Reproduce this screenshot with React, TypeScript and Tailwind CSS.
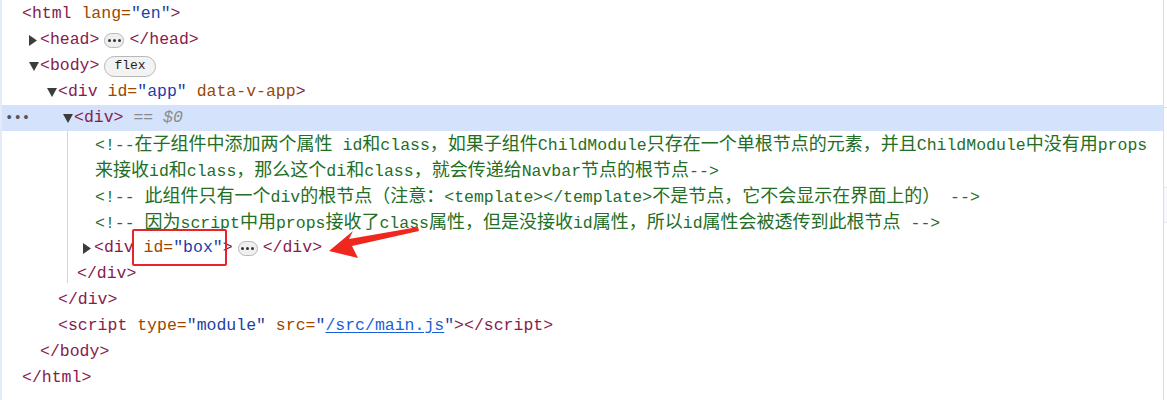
import type { ReactNode } from "react";

const TAG = "text-[#881a4e]";
const ATTR = "text-[#9a4800]";
const VAL = "text-[#1a3fa6]";
const CMT = "text-[#236e25]";

// ascii in mono, CJK runs a bit larger so their width matches the devtools font
function Mixed({ text, className }: { text: string; className?: string }) {
  const parts = text.split(/([\u3000-\u303f\u4e00-\u9fff\uff00-\uffef]+)/);
  return (
    <span className={className}>
      {parts.map((p, i) =>
        i % 2 === 1 ? (
          <span key={i} className="text-[18px] [font-family:'Noto_Sans_CJK_SC',sans-serif]">
            {p}
          </span>
        ) : (
          <span key={i}>{p}</span>
        )
      )}
    </span>
  );
}

function Caret({ open }: { open?: boolean }) {
  return (
    <span className="flex w-[11px] shrink-0 items-center">
      {open ? (
        <svg width="10" height="9" viewBox="0 0 10 9">
          <path d="M0 0H10L5 9Z" fill="#3c3c3c" />
        </svg>
      ) : (
        <svg width="8" height="11" viewBox="0 0 8 11">
          <path d="M0 0L8 5.5L0 11Z" fill="#3c3c3c" />
        </svg>
      )}
    </span>
  );
}

function Dots() {
  return (
    <span className="mx-[5px] inline-flex h-[15px] w-[20px] items-center justify-center gap-[2px] rounded-full border border-[#b8b8b8] bg-[#efefef]">
      <span className="h-[3px] w-[3px] rounded-full bg-[#333]" />
      <span className="h-[3px] w-[3px] rounded-full bg-[#333]" />
      <span className="h-[3px] w-[3px] rounded-full bg-[#333]" />
    </span>
  );
}

function Line({
  className,
  children,
}: {
  className?: string;
  children: ReactNode;
}) {
  return (
    <div className={`flex h-[26px] items-center whitespace-pre ${className ?? ""}`}>
      {children}
    </div>
  );
}

export default function App() {
  return (
    <div className="relative h-[400px] w-[1167px] overflow-hidden bg-white [font-family:'Liberation_Mono',monospace] text-[16.5px]">
      <div className="flex h-full">
        <div className="w-[2px] shrink-0 bg-[#e3ebf9]" />
        <div className="relative flex w-[1161px] flex-col pt-[1px]">
          <Line className="pl-[20px]">
            <span className={TAG}>&lt;html </span>
            <span className={ATTR}>lang=</span>
            <span className={VAL}>"en"</span>
            <span className={TAG}>&gt;</span>
          </Line>
          <Line className="pl-[27px]">
            <Caret />
            <span className={TAG}>&lt;head&gt;</span>
            <Dots />
            <span className={TAG}>&lt;/head&gt;</span>
          </Line>
          <Line className="pl-[27px]">
            <Caret open />
            <span className={TAG}>&lt;body&gt;</span>
            <span className="ml-[5px] inline-flex h-[21px] items-center rounded-full border border-[#b8b8b8] bg-[#f3f3f3] px-[9px] text-[13px] text-[#1f1f1f]">
              flex
            </span>
          </Line>
          <Line className="pl-[45px]">
            <Caret open />
            <span className={TAG}>&lt;div </span>
            <span className={ATTR}>id=</span>
            <span className={VAL}>"app" </span>
            <span className={ATTR}>data-v-app</span>
            <span className={TAG}>&gt;</span>
          </Line>
          <Line className="bg-[#d4e2fb]">
            <span className="w-[61px] pl-[3px] text-[14px] leading-none text-[#555]">•••</span>
            <Caret open />
            <span className={TAG}>&lt;div&gt;</span>
            <span className="italic text-[#8a8a8a]"> == $0</span>
          </Line>
          <div className="relative">
            <div className="absolute left-[65px] top-0 h-[152px] w-px bg-[#c6d8f5]" />
            <Line className="pl-[93px]">
              <Mixed
                className={CMT}
                text="<!--在子组件中添加两个属性 id和class，如果子组件ChildModule只存在一个单根节点的元素，并且ChildModule中没有用props"
              />
            </Line>
            <Line className="pl-[93px]">
              <Mixed
                className={CMT}
                text="来接收id和class，那么这个di和class，就会传递给Navbar节点的根节点-->"
              />
            </Line>
            <Line className="pl-[93px]">
              <Mixed
                className={CMT}
                text="<!-- 此组件只有一个div的根节点（注意：<template></template>不是节点，它不会显示在界面上的） -->"
              />
            </Line>
            <Line className="pl-[93px]">
              <Mixed
                className={CMT}
                text="<!-- 因为script中用props接收了class属性，但是没接收id属性，所以id属性会被透传到此根节点 -->"
              />
            </Line>
            <Line className="pl-[81px]">
              <Caret />
              <span className={TAG}>&lt;div</span>
              <span className="relative">
                <span className="absolute -left-[2px] -right-[4px] -top-[7px] -bottom-[6px] rounded-[2px] border-2 border-[#e8242a]" />
                <span className={ATTR}> id=</span>
                <span className={VAL}>"box"</span>
              </span>
              <span className={TAG}>&gt;</span>
              <Dots />
              <span className={TAG}>&lt;/div&gt;</span>
            </Line>
            <Line className="pl-[75px]">
              <span className={TAG}>&lt;/div&gt;</span>
            </Line>
          </div>
          <Line className="pl-[56px]">
            <span className={TAG}>&lt;/div&gt;</span>
          </Line>
          <Line className="pl-[56px]">
            <span className={TAG}>&lt;script </span>
            <span className={ATTR}>type=</span>
            <span className={VAL}>"module" </span>
            <span className={ATTR}>src=</span>
            <span className={VAL}>"</span>
            <span className="text-[#1a5fd8] underline underline-offset-2">/src/main.js</span>
            <span className={VAL}>"</span>
            <span className={TAG}>&gt;&lt;/script&gt;</span>
          </Line>
          <Line className="pl-[38px]">
            <span className={TAG}>&lt;/body&gt;</span>
          </Line>
          <Line className="pl-[20px]">
            <span className={TAG}>&lt;/html&gt;</span>
          </Line>
        </div>
        <div className="w-px shrink-0 bg-[#d3def2]" />
        <div className="flex flex-1 flex-col">
          <div className="mt-[107px] h-px bg-[#d3def2]" />
          <div className="mt-[79px] h-[36px] border-y border-[#e3ebf9] bg-[#f7f9fd]" />
        </div>
      </div>
      {/* red arrow annotation */}
      <svg
        className="absolute left-[328px] top-[225px]"
        width="92"
        height="34"
        viewBox="0 0 92 34"
      >
        <path d="M1 26L25 6L21 14L90 2L91 6L24 21L30 33Z" fill="#f0271f" />
      </svg>
    </div>
  );
}
